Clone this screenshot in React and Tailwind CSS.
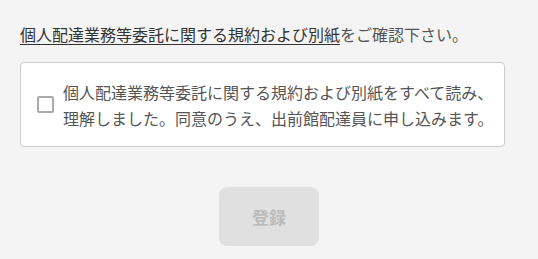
export default function App() {
  return (
    <div
      className="min-h-[259px] w-[538px] bg-[#f4f4f4] pt-[24px]"
      style={{ fontFamily: '"Noto Sans CJK JP", "Noto Sans", sans-serif' }}
    >
      <div className="ml-5 w-[485px]">
        <p className="text-[16px] leading-[20px] text-[#555]">
          <a className="text-[#333] underline underline-offset-[3px] decoration-[1px]">
            個人配達業務等委託に関する規約および別紙
          </a>
          をご確認下さい。
        </p>
        <label className="mt-[18px] flex h-[85px] items-center rounded-[4px] border border-[#cccccc] bg-white pl-4">
          <span className="box-border h-[17px] w-[17px] shrink-0 rounded-[2px] border-2 border-[#aaaaaa] bg-white"></span>
          <span className="ml-[9px] text-[16px] leading-[26px] text-[#555]">
            個人配達業務等委託に関する規約および別紙をすべて読み、
            <br />
            理解しました。同意のうえ、出前館配達員に申し込みます。
          </span>
        </label>
      </div>
      <div className="mt-[40px] flex justify-center">
        <button className="h-[59px] w-[100px] rounded-[8px] bg-[#e0e0e0] text-[17px] font-bold text-[#bbbbbb]">
          登録
        </button>
      </div>
    </div>
  );
}
